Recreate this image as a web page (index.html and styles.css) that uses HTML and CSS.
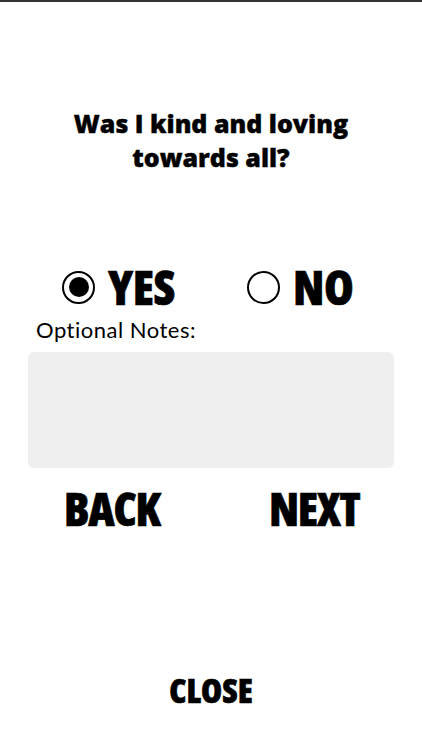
FILE: index.html
```html
<!DOCTYPE html>
<html>
<head>
<meta charset="utf-8">
<link rel="stylesheet" href="styles.css">
</head>
<body>
<div class="screen">
  <h1 class="question">Was I kind and loving<br>towards all?</h1>
  <div class="choices">
    <div class="choice yes"><span class="radio checked"></span><span class="choice-label">YES</span></div>
    <div class="choice no"><span class="radio"></span><span class="choice-label">NO</span></div>
  </div>
  <div class="notes-label">Optional Notes:</div>
  <div class="notes"></div>
  <div class="nav">
    <div class="btn back">BACK</div>
    <div class="btn next">NEXT</div>
  </div>
  <div class="spacer"></div>
  <div class="close">CLOSE</div>
</div>
</body>
</html>
```
FILE: styles.css
```css
html, body {
  margin: 0;
  padding: 0;
  background: #fff;
}
.screen {
  width: 422px;
  height: 750px;
  box-sizing: border-box;
  border-top: 2px solid #333;
  display: flex;
  flex-direction: column;
  color: #000;
}
.question, .choice-label, .btn, .close {
  font-family: "Open Sans", "DejaVu Sans Condensed", sans-serif;
  font-weight: 800;
  font-stretch: 75%;
  -webkit-text-stroke: 0.6px #000;
}
.question {
  margin: 104px 0 0;
  font-size: 25px;
  line-height: 34px;
  font-stretch: 93%;
  -webkit-text-stroke: 0.4px #000;
  text-align: center;
}
.choices {
  display: grid;
  grid-template-columns: 185px auto;
  margin-top: 93px;
  padding-left: 62px;
  align-items: center;
  height: 40px;
}
.choice {
  display: flex;
  align-items: center;
  gap: 13px;
}
.radio {
  width: 33px;
  height: 33px;
  box-sizing: border-box;
  border: 2.5px solid #000;
  border-radius: 50%;
  display: flex;
  align-items: center;
  justify-content: center;
}
.radio.checked::after {
  content: "";
  width: 20px;
  height: 20px;
  border-radius: 50%;
  background: #000;
}
.choice-label {
  font-size: 48px;
  line-height: 40px;
  letter-spacing: -0.5px;
}
.notes-label {
  font-family: "Lato", "DejaVu Sans", sans-serif;
  font-size: 22px;
  line-height: 26px;
  letter-spacing: 0.5px;
  margin: 10px 0 0 36px;
}
.notes {
  margin: 9px 28px 0;
  height: 116px;
  background: #efefef;
  border-radius: 6px;
}
.nav {
  display: grid;
  grid-template-columns: 205px auto;
  padding-left: 64px;
  margin-top: 22px;
}
.btn {
  font-size: 46px;
  line-height: 36px;
  letter-spacing: -1.3px;
}
.spacer {
  flex: 1;
}
.close {
  text-align: center;
  font-size: 34px;
  line-height: 30px;
  margin-bottom: 45px;
}
```
